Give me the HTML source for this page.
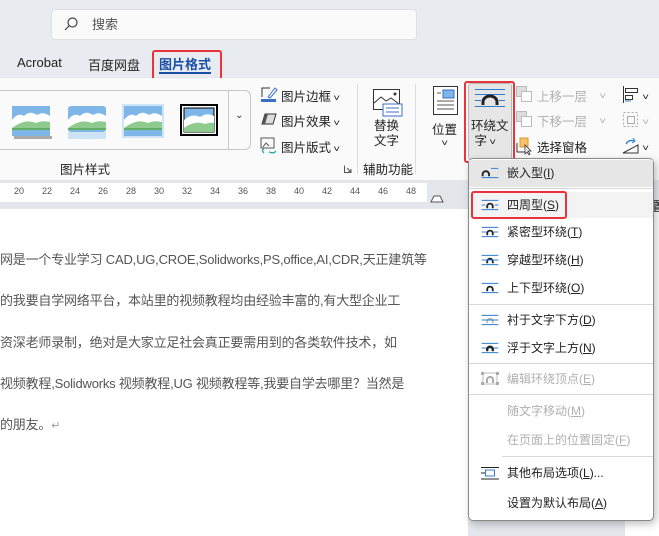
<!DOCTYPE html>
<html><head><meta charset="utf-8"><style>
*{margin:0;padding:0;box-sizing:border-box}
body{width:659px;height:536px;overflow:hidden;background:#e3e7ec;font-family:"Liberation Sans","Noto Sans CJK SC",sans-serif;position:relative;color:#222}
.a{position:absolute;white-space:nowrap}
.t{font-size:12.5px}
.mi{position:absolute;left:470px;width:182px;height:26px;font-size:12px;line-height:26px;padding-left:37px}
.ic{position:absolute;left:11px;top:7px;width:18px;height:12px}
.sep{position:absolute;height:1px;background:#d6d6d6}
.g{color:#b0b0b0}
u{text-decoration:underline}
.cv{font-size:9px;transform:scaleX(1.3);display:inline-block}
</style></head><body>
<!-- top -->
<div class="a" style="left:0;top:0;width:659px;height:77px;background:#e8ecf0"></div>
<div class="a" style="left:51px;top:9px;width:366px;height:31px;background:#fafafa;border:1px solid #e0e0e0;border-radius:4px"></div>
<svg class="a" style="left:63px;top:16px" width="16" height="16"><circle cx="9.5" cy="6.5" r="4.5" fill="none" stroke="#444" stroke-width="1.2"/><line x1="6.3" y1="9.7" x2="2" y2="14" stroke="#444" stroke-width="1.2"/></svg>
<div class="a" style="left:92px;top:14px;font-size:13px;color:#555">搜索</div>
<div class="a" style="left:17px;top:55px;font-size:13px;color:#222">Acrobat</div>
<div class="a" style="left:88px;top:55px;font-size:13px;color:#222">百度网盘</div>
<div class="a" style="left:159px;top:54px;font-size:13px;color:#1a4fa8;font-weight:bold">图片格式</div>
<div class="a" style="left:159px;top:72px;width:52px;height:2px;background:#1a4fa8"></div>
<div class="a" style="left:152px;top:50px;width:70px;height:32px;border:2px solid #e8333a;border-radius:3px"></div>
<!-- ribbon -->
<div class="a" style="left:0;top:78px;width:659px;height:102px;background:#fafafa"></div>
<div class="a" style="left:0;top:90px;width:251px;height:60px;border:1px solid #c8c8c8;border-left:none;border-radius:0 6px 6px 0"></div>
<div class="a" style="left:228px;top:90px;width:1px;height:60px;background:#c8c8c8"></div>
<div class="a" style="left:235px;top:110px;font-size:10px;color:#333">⌄</div>
<svg class="a" style="left:10px;top:104px" width="230" height="38">
<g><rect x="2" y="2" width="38" height="30" fill="#7eb6e8"/><rect x="4" y="32" width="38" height="3" fill="#aaa"/><path d="M2 16 Q8 8 14 12 Q20 6 27 11 Q33 7 40 12 L40 24 L2 24Z" fill="#fff"/><path d="M2 24 Q15 14 26 19 Q32 16 40 18 L40 26 L2 26Z" fill="#8fcb8e"/><line x1="2" y1="25" x2="40" y2="25" stroke="#3a8f3a"/></g>
<g transform="translate(56,0)"><rect x="2" y="2" width="38" height="26" fill="#7eb6e8" rx="3"/><rect x="2" y="28" width="38" height="7" fill="#cce2f5"/><path d="M2 16 Q8 8 14 12 Q20 6 27 11 Q33 7 40 12 L40 24 L2 24Z" fill="#fff"/><path d="M2 24 Q15 14 26 19 Q32 16 40 18 L40 26 L2 26Z" fill="#8fcb8e"/><line x1="2" y1="25" x2="40" y2="25" stroke="#3a8f3a"/></g>
<g transform="translate(112,0)"><rect x="0" y="0" width="42" height="34" fill="#cfe3f6"/><rect x="2" y="2" width="38" height="30" fill="#7eb6e8"/><path d="M2 16 Q8 8 14 12 Q20 6 27 11 Q33 7 40 12 L40 24 L2 24Z" fill="#fff"/><path d="M2 24 Q15 14 26 19 Q32 16 40 18 L40 26 L2 26Z" fill="#8fcb8e"/><line x1="2" y1="25" x2="40" y2="25" stroke="#3a8f3a"/></g>
<g transform="translate(170,0)"><rect x="1" y="1" width="36" height="30" fill="#fff" stroke="#000" stroke-width="2"/><rect x="4" y="4" width="30" height="24" fill="#7eb6e8" stroke="#000"/><path d="M4 16 Q12 9 20 13 Q27 8 34 12 L34 24 L4 24Z" fill="#fff"/><path d="M4 24 Q15 16 25 20 Q30 18 34 19 L34 28 L4 28Z" fill="#8fcb8e"/></g>
</svg>
<div class="a t" style="left:60px;top:159px">图片样式</div>
<svg class="a" style="left:344px;top:165px" width="8" height="8"><path d="M0.5 0.5V7.5H7.5M3 3L7 7M7 4V7H4" fill="none" stroke="#555"/></svg>
<svg class="a" style="left:260px;top:85px" width="18" height="18"><rect x="1" y="14" width="15" height="3" fill="#3b6fc4"/><path d="M2 12V3H10" fill="none" stroke="#333"/><path d="M8 12L15 3L17 5L10 13Z" fill="#fff" stroke="#3b6fc4"/></svg>
<div class="a t" style="left:281px;top:86px">图片边框 <span class="cv">˅</span></div>
<svg class="a" style="left:260px;top:112px" width="18" height="14"><path d="M5 2H16L13 12H2Z" fill="#ddd" stroke="#333"/><path d="M2 12L5 2L8 2L5 12Z" fill="#555"/></svg>
<div class="a t" style="left:281px;top:111px">图片效果 <span class="cv">˅</span></div>
<svg class="a" style="left:260px;top:137px" width="18" height="18"><rect x="1" y="1" width="13" height="10" fill="none" stroke="#555"/><path d="M3 10L6 6L9 9" fill="none" stroke="#555"/><path d="M4 16Q1 13 4 12M9 15Q14 17 16 14" fill="none" stroke="#2aa" stroke-width="1.3"/></svg>
<div class="a t" style="left:281px;top:137px">图片版式 <span class="cv">˅</span></div>
<div class="a" style="left:357px;top:84px;width:1px;height:90px;background:#ddd"></div>
<svg class="a" style="left:373px;top:89px" width="30" height="28"><rect x="0.5" y="0.5" width="26" height="20" fill="#fff" stroke="#333"/><path d="M1 14L8 8L13 12L18 9L26 15" fill="none" stroke="#333"/><circle cx="22" cy="5" r="1.5" fill="#333"/><rect x="10" y="15" width="19" height="12" fill="#fff" stroke="#3b6fc4"/><line x1="13" y1="19" x2="26" y2="19" stroke="#3b6fc4"/><line x1="13" y1="23" x2="26" y2="23" stroke="#3b6fc4"/></svg>
<div class="a t" style="left:374px;top:119px;line-height:15px">替换<br>文字</div>
<div class="a t" style="left:363px;top:159px">辅助功能</div>
<div class="a" style="left:415px;top:84px;width:1px;height:90px;background:#ddd"></div>
<svg class="a" style="left:433px;top:86px" width="26" height="30"><rect x="0.5" y="0.5" width="24" height="28" fill="#fff" stroke="#333"/><rect x="10" y="4" width="11" height="8" fill="#7eb6e8" stroke="#3b6fc4"/><g stroke="#555"><line x1="4" y1="7" x2="8" y2="7"/><line x1="4" y1="15" x2="21" y2="15"/><line x1="4" y1="19" x2="21" y2="19"/><line x1="4" y1="23" x2="21" y2="23"/></g></svg>
<div class="a t" style="left:432px;top:119px">位置</div>
<div class="a" style="left:442px;top:133px"><span class="cv">˅</span></div>
<div class="a" style="left:468px;top:83px;width:44px;height:77px;background:#e6e6e6;border:1px solid #b8b8b8;border-radius:3px"></div>
<div class="a" style="left:464px;top:81px;width:51px;height:82px;border:2px solid #e8333a;border-radius:3px"></div>
<svg class="a" style="left:475px;top:88px" width="30" height="20"><g stroke="#2b7cd3"><line x1="0" y1="1.5" x2="30" y2="1.5"/><line x1="0" y1="6.5" x2="30" y2="6.5"/><line x1="0" y1="12.5" x2="6" y2="12.5"/><line x1="24" y1="12.5" x2="30" y2="12.5"/><line x1="0" y1="18.5" x2="30" y2="18.5"/></g><path d="M8 17V14A7 6 0 0 1 22 14V17" fill="none" stroke="#222" stroke-width="3"/></svg>
<div class="a t" style="left:471px;top:119px;line-height:15px">环绕文<br>&nbsp;字 <span class="cv">˅</span></div>
<svg class="a" style="left:516px;top:86px" width="16" height="16"><rect x="0.5" y="0.5" width="10" height="10" fill="#ddd" stroke="#bbb"/><rect x="5.5" y="5.5" width="10" height="10" fill="#fff" stroke="#bbb"/></svg>
<div class="a t g" style="left:537px;top:86px">上移一层</div><div class="a g" style="left:600px;top:86px"><span class="cv">˅</span></div>
<svg class="a" style="left:516px;top:111px" width="16" height="16"><rect x="0.5" y="0.5" width="10" height="10" fill="#ddd" stroke="#bbb"/><rect x="5.5" y="5.5" width="10" height="10" fill="#fff" stroke="#bbb"/></svg>
<div class="a t g" style="left:537px;top:111px">下移一层</div><div class="a g" style="left:600px;top:111px"><span class="cv">˅</span></div>
<svg class="a" style="left:516px;top:137px" width="18" height="18"><rect x="4" y="1" width="8" height="9" fill="#f5c26b" stroke="#d89a2a"/><path d="M1 6V15H10" fill="none" stroke="#333"/><path d="M9 8L9 17L11 15L13 18L14 17L12 14H15Z" fill="#fff" stroke="#333" stroke-width=".8"/></svg>
<div class="a t" style="left:537px;top:137px">选择窗格</div>
<svg class="a" style="left:622px;top:86px" width="18" height="18"><line x1="1.5" y1="0" x2="1.5" y2="17" stroke="#333"/><rect x="3.5" y="2.5" width="12" height="4" fill="#fff" stroke="#333"/><rect x="3.5" y="9.5" width="7" height="4" fill="#fff" stroke="#333"/><path d="M9 15H3" stroke="#2b7cd3"/></svg><div class="a" style="left:643px;top:87px"><span class="cv">˅</span></div>
<svg class="a" style="left:622px;top:111px" width="18" height="18"><rect x="1.5" y="1.5" width="14" height="14" fill="none" stroke="#aaa" stroke-dasharray="2 2"/><rect x="5.5" y="5.5" width="7" height="7" fill="none" stroke="#aaa"/></svg><div class="a g" style="left:643px;top:112px"><span class="cv">˅</span></div>
<svg class="a" style="left:622px;top:137px" width="18" height="18"><path d="M1 16L16 8V16Z" fill="#fff" stroke="#333"/><path d="M4 7Q7 2 12 4" fill="none" stroke="#2b7cd3" stroke-width="1.3"/><path d="M11 1L13 4L10 6" fill="none" stroke="#2b7cd3"/></svg><div class="a" style="left:643px;top:138px"><span class="cv">˅</span></div>
<!-- ruler -->
<div class="a" style="left:0;top:183px;width:427px;height:19px;background:#fff"></div>
<div class="a" style="left:0;top:186px;width:430px;font-size:9px;color:#555;word-spacing:0">
<span class="a" style="left:14px">20</span><span class="a" style="left:42px">22</span><span class="a" style="left:70px">24</span><span class="a" style="left:98px">26</span><span class="a" style="left:126px">28</span><span class="a" style="left:154px">30</span><span class="a" style="left:182px">32</span><span class="a" style="left:210px">34</span><span class="a" style="left:238px">36</span><span class="a" style="left:266px">38</span><span class="a" style="left:294px">40</span><span class="a" style="left:322px">42</span><span class="a" style="left:350px">44</span><span class="a" style="left:378px">46</span><span class="a" style="left:406px">48</span></div>
<svg class="a" style="left:430px;top:193px" width="14" height="10"><path d="M1 9L4 3H10L13 9Z" fill="#fff" stroke="#555"/></svg>
<!-- doc -->
<div class="a" style="left:0;top:209px;width:468px;height:327px;background:#fff"></div>
<div class="a" style="left:625px;top:209px;width:34px;height:327px;background:#fff"></div>
<div class="a" style="left:0;top:239px;font-size:13px;color:#555;line-height:41.3px;letter-spacing:-0.2px">
网是一个专业学习 CAD,UG,CROE,Solidworks,PS,office,AI,CDR,天正建筑等<br>的我要自学网络平台，本站里的视频教程均由经验丰富的,有大型企业工<br>资深老师录制，绝对是大家立足社会真正要需用到的各类软件技术，如<br>视频教程,Solidworks 视频教程,UG 视频教程等,我要自学去哪里？当然是<br>的朋友。<span style="color:#999;font-size:11px">↵</span></div>
<div class="a" style="left:652px;top:196px;font-size:13px">置</div>
<!-- menu -->
<div class="a" style="left:468px;top:158px;width:186px;height:363px;background:#fff;border:1px solid #8a8a8a;border-radius:5px;box-shadow:2px 3px 8px rgba(0,0,0,.25)"></div>
<div class="a" style="left:469px;top:160px;width:184px;height:27px;background:#e6e6e6"></div>
<div class="sep" style="left:469px;top:188px;width:184px"></div>
<div class="a" style="left:469px;top:192px;width:184px;height:26px;background:#f3f3f3"></div>
<div class="a" style="left:471px;top:191px;width:96px;height:28px;border:2px solid #e8333a;border-radius:3px"></div>
<svg width="0" height="0" style="position:absolute"><defs>
<g id="w"><line x1="0" y1="1.5" x2="18" y2="1.5" stroke="#2b7cd3"/><line x1="0" y1="11.5" x2="18" y2="11.5" stroke="#2b7cd3"/><path d="M6 10V8A3 3 0 0 1 12 8V10" fill="none" stroke="#222" stroke-width="2"/></g></defs></svg>
<div class="mi" style="top:160px">嵌入型(<u>I</u>)<svg class="ic" viewBox="0 0 18 13"><line x1="0" y1="11.5" x2="18" y2="11.5" stroke="#2b7cd3"/><line x1="10" y1="1.5" x2="18" y2="1.5" stroke="#2b7cd3"/><path d="M1 10V8A3.5 3.5 0 0 1 8 8V10" fill="none" stroke="#222" stroke-width="2"/></svg></div>
<div class="mi" style="top:192px">四周型(<u>S</u>)<svg class="ic" viewBox="0 0 18 13"><use href="#w"/><line x1="0" y1="6.5" x2="4" y2="6.5" stroke="#2b7cd3"/><line x1="14" y1="6.5" x2="18" y2="6.5" stroke="#2b7cd3"/></svg></div>
<div class="mi" style="top:219px">紧密型环绕(<u>T</u>)<svg class="ic" viewBox="0 0 18 13"><use href="#w"/><line x1="0" y1="6.5" x2="5" y2="6.5" stroke="#2b7cd3"/><line x1="13" y1="6.5" x2="18" y2="6.5" stroke="#2b7cd3"/></svg></div>
<div class="mi" style="top:247px">穿越型环绕(<u>H</u>)<svg class="ic" viewBox="0 0 18 13"><use href="#w"/><line x1="0" y1="6.5" x2="18" y2="6.5" stroke="#2b7cd3"/></svg></div>
<div class="mi" style="top:275px">上下型环绕(<u>O</u>)<svg class="ic" viewBox="0 0 18 13"><use href="#w"/></svg></div>
<div class="sep" style="left:469px;top:304px;width:184px"></div>
<div class="mi" style="top:307px">衬于文字下方(<u>D</u>)<svg class="ic" viewBox="0 0 18 13"><line x1="0" y1="1.5" x2="18" y2="1.5" stroke="#2b7cd3"/><line x1="0" y1="11.5" x2="18" y2="11.5" stroke="#2b7cd3"/><path d="M6 10V8A3 3 0 0 1 12 8V10" fill="none" stroke="#bbb" stroke-width="2"/><line x1="0" y1="6.5" x2="18" y2="6.5" stroke="#2b7cd3"/></svg></div>
<div class="mi" style="top:335px">浮于文字上方(<u>N</u>)<svg class="ic" viewBox="0 0 18 13"><line x1="0" y1="1.5" x2="18" y2="1.5" stroke="#2b7cd3"/><line x1="0" y1="11.5" x2="18" y2="11.5" stroke="#2b7cd3"/><line x1="0" y1="6.5" x2="18" y2="6.5" stroke="#2b7cd3"/><path d="M6 10V8A3 3 0 0 1 12 8V10" fill="none" stroke="#222" stroke-width="2.5"/></svg></div>
<div class="sep" style="left:469px;top:363px;width:184px"></div>
<div class="mi g" style="top:366px">编辑环绕顶点(<u>E</u>)<svg class="ic" viewBox="0 0 18 13" style="top:5px;height:15px"><rect x="2" y="1" width="14" height="11" fill="none" stroke="#bbb"/><rect x="0" y="0" width="3" height="3" fill="#aaa"/><rect x="15" y="0" width="3" height="3" fill="#aaa"/><rect x="0" y="10" width="3" height="3" fill="#aaa"/><rect x="15" y="10" width="3" height="3" fill="#aaa"/><path d="M6 11V8A3 3 0 0 1 12 8V11" fill="none" stroke="#aaa" stroke-width="2"/></svg></div>
<div class="sep" style="left:469px;top:394px;width:184px"></div>
<div class="mi g" style="top:398px">随文字移动(<u>M</u>)</div>
<div class="mi g" style="top:427px">在页面上的位置固定(<u>F</u>)</div>
<div class="sep" style="left:502px;top:456px;width:151px"></div>
<div class="mi" style="top:460px">其他布局选项(<u>L</u>)...<svg class="ic" viewBox="0 0 18 13" style="top:6px;height:14px"><line x1="0" y1="1" x2="18" y2="1" stroke="#222"/><line x1="0" y1="12.5" x2="18" y2="12.5" stroke="#222"/><rect x="4.5" y="3.5" width="9" height="6" fill="none" stroke="#2b7cd3"/><line x1="0" y1="6.5" x2="4" y2="6.5" stroke="#222"/></svg></div>
<div class="mi" style="top:490px">设置为默认布局(<u>A</u>)</div>
</body></html>
